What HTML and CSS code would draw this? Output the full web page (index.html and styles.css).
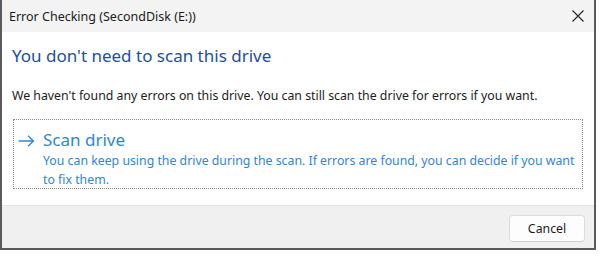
FILE: index.html
```html
<!DOCTYPE html>
<html>
<head>
<meta charset="utf-8">
<link rel="stylesheet" href="styles.css">
</head>
<body>
<div class="window">
  <div class="titlebar">
    <span class="title">Error Checking (SecondDisk (E:))</span>
    <svg class="close" width="12" height="12" viewBox="0 0 12 12"><path d="M0.5 0.5 L11.5 11.5 M11.5 0.5 L0.5 11.5" stroke="#222" stroke-width="1.1" fill="none"/></svg>
  </div>
  <div class="content">
    <h1 class="heading">You don't need to scan this drive</h1>
    <p class="body">We haven't found any errors on this drive. You can still scan the drive for errors if you want.</p>
    <div class="cmdlink">
      <svg class="arrow" width="17" height="12" viewBox="0 0 17 12"><path d="M0.5 6 H15.5 M10 0.7 L15.5 6 L10 11.3" stroke="#2f86d6" stroke-width="1.3" fill="none"/></svg>
      <div class="cmdtext">
        <div class="cmdtitle">Scan drive</div>
        <div class="cmddesc">You can keep using the drive during the scan. If errors are found, you can decide if you want to fix them.</div>
      </div>
    </div>
  </div>
  <div class="footer">
    <button class="btn">Cancel</button>
  </div>
</div>
</body>
</html>
```
FILE: styles.css
```css
html, body { margin: 0; padding: 0; background: #fff; }
body { width: 600px; height: 256px; overflow: hidden; font-family: "Noto Sans", "Open Sans", sans-serif; }
.window {
  width: 592px;
  height: 248px;
  border-left: 2px solid #5b5b5b;
  border-right: 2px solid #5b5b5b;
  border-bottom: 2px solid #5b5b5b;
  display: flex;
  flex-direction: column;
  background: #fff;
}
.titlebar {
  height: 32px;
  background: #f3f3f3;
  display: flex;
  align-items: center;
  justify-content: space-between;
  padding: 0 10px 0 7px;
  flex: none;
}
.title { font-size: 12.5px; color: #1b1b1b; }
.close { display: block; }
.content {
  flex: 1;
  padding: 12px 10px 0 10px;
}
.heading {
  margin: 0;
  font-weight: normal;
  font-size: 17px;
  color: #1d4f9e;
  line-height: 24px;
}
.body {
  margin: 20px 0 0 0;
  font-size: 12.3px;
  line-height: 16px;
  color: #1b1b1b;
}
.cmdlink {
  margin: 15px 1px 0 1px;
  border: 1px dotted #8a8a8a;
  display: flex;
  padding: 9px 0 3px 4px;
  gap: 8px;
  height: 56px;
}
.arrow { margin-top: 6px; flex: none; }
.cmdtitle { font-size: 17px; color: #2f86d6; line-height: 22px; }
.cmddesc { font-size: 12.3px; color: #2f86d6; line-height: 19px; }
.footer {
  height: 42px;
  background: #f0f0f0;
  border-top: 1px solid #e6e6e6;
  display: flex;
  align-items: center;
  justify-content: flex-end;
  padding: 0 9px 0 0;
  flex: none;
}
.btn {
  width: 76px;
  height: 27px;
  background: #fdfdfd;
  border: 1px solid #dcdcdc;
  border-bottom-color: #cfcfcf;
  border-radius: 4px;
  font-family: inherit;
  font-size: 12.3px;
  color: #1b1b1b;
  margin-top: 2px;
}
```
